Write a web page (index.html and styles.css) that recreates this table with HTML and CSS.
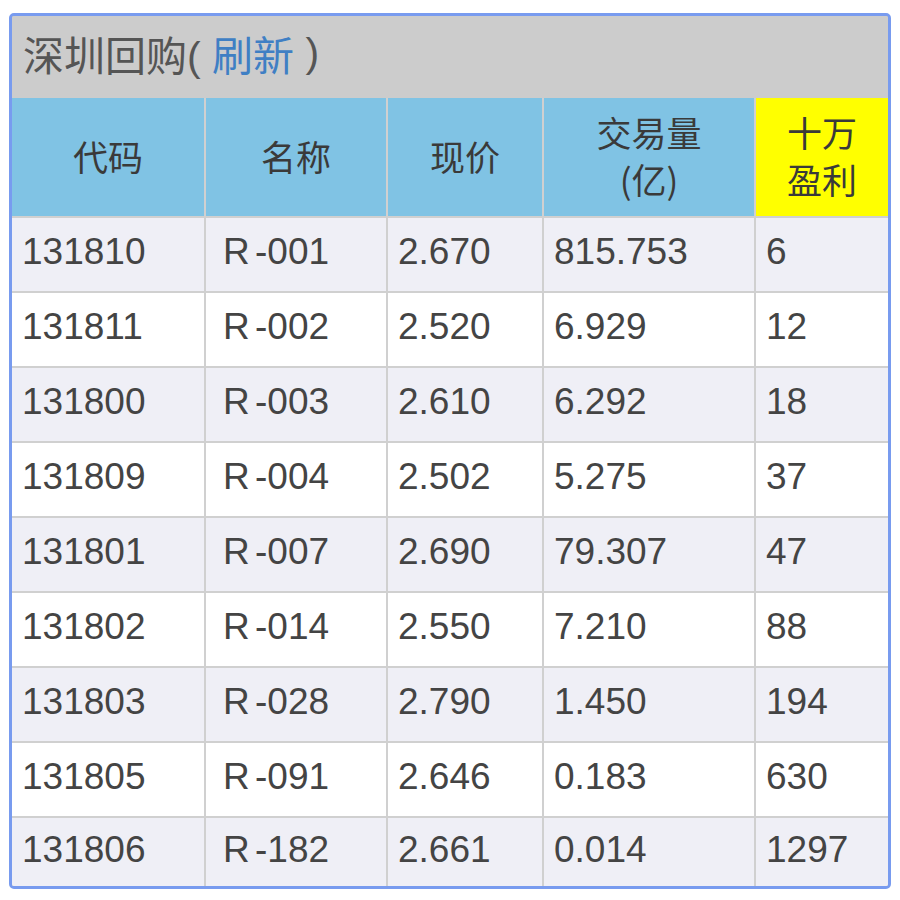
FILE: index.html
```html
<!DOCTYPE html>
<html lang="zh-CN">
<head>
<meta charset="utf-8">
<title>深圳回购</title>
<link rel="stylesheet" href="styles.css">
</head>
<body>
<div class="panel">
  <div class="title">深圳回购( <a class="refresh" href="#">刷新</a> )</div>
  <div class="grid">
    <div class="hd">代码</div>
    <div class="hd">名称</div>
    <div class="hd">现价</div>
    <div class="hd">交易量<br>(亿)</div>
    <div class="hd hl">十万<br>盈利</div>

    <div class="c odd">131810</div><div class="c odd name">R -001</div><div class="c odd">2.670</div><div class="c odd">815.753</div><div class="c odd">6</div>
    <div class="c">131811</div><div class="c name">R -002</div><div class="c">2.520</div><div class="c">6.929</div><div class="c">12</div>
    <div class="c odd">131800</div><div class="c odd name">R -003</div><div class="c odd">2.610</div><div class="c odd">6.292</div><div class="c odd">18</div>
    <div class="c">131809</div><div class="c name">R -004</div><div class="c">2.502</div><div class="c">5.275</div><div class="c">37</div>
    <div class="c odd">131801</div><div class="c odd name">R -007</div><div class="c odd">2.690</div><div class="c odd">79.307</div><div class="c odd">47</div>
    <div class="c">131802</div><div class="c name">R -014</div><div class="c">2.550</div><div class="c">7.210</div><div class="c">88</div>
    <div class="c odd">131803</div><div class="c odd name">R -028</div><div class="c odd">2.790</div><div class="c odd">1.450</div><div class="c odd">194</div>
    <div class="c">131805</div><div class="c name">R -091</div><div class="c">2.646</div><div class="c">0.183</div><div class="c">630</div>
    <div class="c odd">131806</div><div class="c odd name">R -182</div><div class="c odd">2.661</div><div class="c odd">0.014</div><div class="c odd">1297</div>
  </div>
</div>
</body>
</html>
```

FILE: styles.css
```css
html, body {
  margin: 0;
  padding: 0;
  background: #ffffff;
}

body {
  font-family: "Liberation Sans", Arial, "Noto Sans CJK SC", sans-serif;
  color: #444444;
}

.panel {
  margin: 13px 0 0 9px;
  width: 876px;
  border: 3px solid #789bef;
  border-radius: 5px;
  overflow: hidden;
  background: #d0d0d0;
}

.title {
  height: 82px;
  box-sizing: border-box;
  padding: 0 0 8px 11px;
  display: flex;
  align-items: center;
  background: #cccccc;
  font-family: "Liberation Sans", "Noto Sans CJK SC", sans-serif;
  font-size: 41px;
  color: #555555;
  white-space: pre;
}

.refresh {
  color: #3f7fc4;
  text-decoration: none;
}

.grid {
  display: grid;
  grid-template-columns: 192px 180px 154px 210px 132px;
  grid-template-rows: 118px repeat(8, 73px) 68px;
  gap: 2px;
  background: #d0d0d0;
}

.hd {
  background: #80c3e4;
  display: flex;
  align-items: center;
  justify-content: center;
  box-sizing: border-box;
  padding-bottom: 4px;
  text-align: center;
  font-family: "Noto Sans CJK SC", "Liberation Sans", sans-serif;
  font-size: 35px;
  line-height: 47px;
  color: #3a3a3a;
}

.hd.hl {
  background: #ffff00;
}

.c {
  background: #ffffff;
  display: flex;
  align-items: center;
  box-sizing: border-box;
  padding: 0 0 5px 10px;
  font-size: 37px;
  color: #444444;
}

.c.odd {
  background: #efeff6;
}

.c.name {
  padding-left: 17px;
  word-spacing: -5px;
}
```
